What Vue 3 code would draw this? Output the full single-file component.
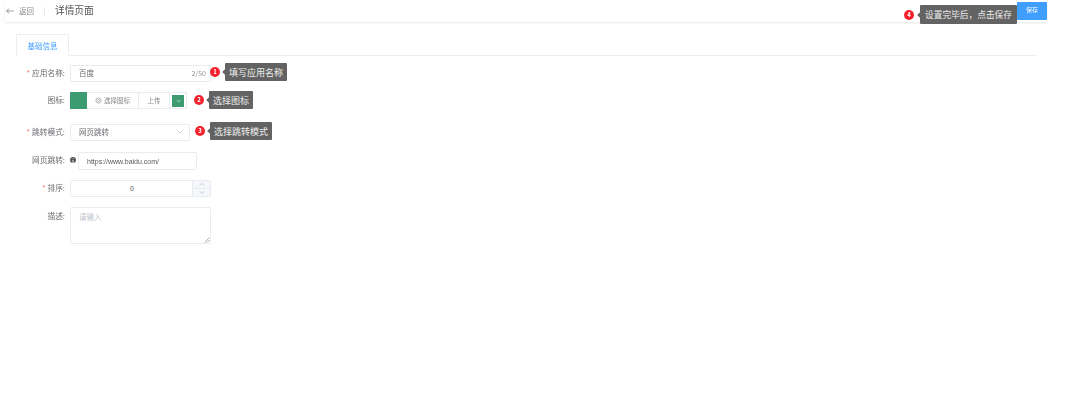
<template>
  <div class="page">
    <header class="topbar">
      <div class="back">
        <svg class="back-icon" viewBox="0 0 8 6" width="8" height="6">
          <path d="M3 .6.6 3 3 5.4M.6 3H7.6" fill="none" stroke="#6b6d70" stroke-width=".7" />
        </svg>
        <span>返回</span>
      </div>
      <i class="divider"></i>
      <h1 class="title">详情页面</h1>
      <div class="top-right">
        <span class="badge">4</span>
        <span class="tip">设置完毕后，点击保存</span>
        <button class="save">保存</button>
      </div>
    </header>

    <main class="content">
      <div class="tabs">
        <div class="tab">基础信息</div>
      </div>

      <form class="form" @submit.prevent>
        <div class="row row-name">
          <label class="label"><em>*</em>应用名称:</label>
          <div class="input name-input">
            <span>百度</span>
            <span class="count">2/50</span>
          </div>
          <span class="badge">1</span>
          <span class="tip">填写应用名称</span>
        </div>

        <div class="row row-icon">
          <label class="label">图标:</label>
          <div class="icon-group">
            <i class="swatch"></i>
            <div class="pick">
              <svg viewBox="0 0 8 8" width="7" height="7">
                <circle cx="4" cy="4" r="3" fill="none" stroke="#8a8c90" stroke-width=".7" />
                <circle cx="4" cy="4" r="1.2" fill="none" stroke="#8a8c90" stroke-width=".6" />
              </svg>
              选择图标
            </div>
            <div class="upload">上传</div>
          </div>
          <div class="color-box">
            <div class="color-inner">
              <svg viewBox="0 0 6 4" width="5" height="4">
                <path d="M.8.8 3 3 5.2.8" fill="none" stroke="#fff" stroke-width=".8" />
              </svg>
            </div>
          </div>
          <span class="badge">2</span>
          <span class="tip">选择图标</span>
        </div>

        <div class="row row-mode">
          <label class="label"><em>*</em>跳转模式:</label>
          <div class="input mode-select">
            <span>网页跳转</span>
            <svg viewBox="0 0 8 5" width="8" height="5">
              <path d="M.7.7 4 4 7.3.7" fill="none" stroke="#c0c4cc" stroke-width=".7" />
            </svg>
          </div>
          <span class="badge">3</span>
          <span class="tip">选择跳转模式</span>
        </div>

        <div class="row row-url">
          <label class="label">网页跳转:</label>
          <span class="info">i</span>
          <div class="input url-input">https://www.baidu.com/</div>
        </div>

        <div class="row row-sort">
          <label class="label"><em>*</em>排序:</label>
          <div class="input number">
            <span class="value">0</span>
            <div class="stepper">
              <div>
                <svg viewBox="0 0 8 4" width="6" height="3"><path d="M.7 3.4 4 .6 7.3 3.4" fill="none" stroke="#b4b7bd" stroke-width=".8" /></svg>
              </div>
              <div>
                <svg viewBox="0 0 8 4" width="6" height="3"><path d="M.7.6 4 3.4 7.3.6" fill="none" stroke="#b4b7bd" stroke-width=".8" /></svg>
              </div>
            </div>
          </div>
        </div>

        <div class="row row-desc">
          <label class="label">描述:</label>
          <div class="input textarea">
            <span>请输入</span>
            <svg class="grip" viewBox="0 0 6 6" width="6" height="6">
              <path d="M.5 5.5 5.5.5M3 5.5 5.5 3" fill="none" stroke="#777" stroke-width=".6" />
            </svg>
          </div>
        </div>
      </form>
    </main>
  </div>
</template>

<script setup>
</script>

<style>
html,
body {
  margin: 0;
  background: #fff;
}
</style>

<style scoped>
.page {
  width: 1070px;
  height: 414px;
  overflow: hidden;
  font-family: "Noto Sans CJK SC", "Liberation Sans", sans-serif;
  color: #606266;
  font-size: 7px;
  filter: blur(0.5px);
}

.topbar {
  display: flex;
  align-items: center;
  width: 1042px;
  height: 22px;
  margin-left: 5px;
  box-shadow: 0 1px 2px rgba(0, 0, 0, 0.1);
}
.back {
  display: flex;
  align-items: center;
  gap: 5px;
  margin-left: 1px;
  padding-bottom: 1px;
  color: #85878b;
  font-size: 7.5px;
}
.divider {
  width: 1px;
  height: 9px;
  margin: 0 11px 0 10px;
  background: #e8e9eb;
}
.title {
  margin: 0 0 2px -1px;
  font-size: 9.7px;
  font-weight: 400;
  color: #555;
}
.top-right {
  display: flex;
  align-items: flex-start;
  height: 22px;
  margin-left: auto;
}
.top-right .badge {
  margin: 10px 6px 0 0;
}
.top-right .tip {
  width: 97px;
  height: 19px;
  margin-top: 5px;
  padding: 0;
  font-size: 8.7px;
}
.save {
  width: 30px;
  height: 18px;
  margin-top: 2px;
  padding: 0 0 3px;
  border: 0;
  border-radius: 1px;
  background: #409eff;
  color: #fff;
  font-family: inherit;
  font-size: 6px;
}

.content {
  width: 1021px;
  margin: 12px 0 0 16px;
}
.tabs {
  height: 21px;
  border-bottom: 1px solid #eceef1;
}
.tab {
  box-sizing: border-box;
  display: flex;
  align-items: center;
  justify-content: center;
  width: 53px;
  height: 22px;
  border: 1px solid #eceef1;
  border-bottom-color: #fff;
  border-radius: 2px 2px 0 0;
  color: #409eff;
  font-size: 7.5px;
}

.form {
  margin: 9px 0 0 -16px;
}
.row {
  display: flex;
  align-items: center;
  height: 17px;
}
.row-icon {
  margin-top: 10px;
}
.row-mode {
  margin-top: 15px;
}
.row-url {
  margin-top: 11px;
  height: 18px;
}
.row-sort {
  margin-top: 10px;
}
.row-desc {
  align-items: flex-start;
  height: 37px;
  margin-top: 10px;
}

.label {
  flex: none;
  box-sizing: border-box;
  width: 70px;
  padding: 0 5px 2px 0;
  text-align: right;
  font-size: 7.7px;
  color: #6a6c70;
}
.row-url .label {
  padding-bottom: 4px;
}
.row-desc .label {
  padding: 3px 5px 0 0;
}
.label em {
  margin-right: 2px;
  color: #f56c6c;
  font-style: normal;
}

.input {
  box-sizing: border-box;
  display: flex;
  align-items: center;
  height: 100%;
  padding: 0 8px 2px;
  border: 1px solid #e8ebf0;
  border-radius: 2px;
  background: #fff;
  font-size: 7.5px;
  color: #6a6c70;
}
.name-input {
  justify-content: space-between;
  width: 141px;
  padding-right: 4px;
}
.count {
  color: #909399;
  font-size: 7px;
}
.mode-select {
  justify-content: space-between;
  width: 120px;
  padding-right: 5px;
}
.url-input {
  width: 119px;
  padding-bottom: 0;
  font-family: "Liberation Sans", sans-serif;
  font-size: 7px;
  color: #55585c;
}
.number {
  position: relative;
  justify-content: center;
  width: 141px;
  padding: 0 17px 0 0;
  font-family: "Liberation Sans", sans-serif;
  font-size: 7px;
  color: #55585c;
}
.stepper {
  position: absolute;
  top: 0;
  right: 0;
  bottom: 0;
  display: flex;
  flex-direction: column;
  width: 17px;
  border-left: 1px solid #e8ebf0;
  background: #f5f7fa;
}
.stepper div {
  display: flex;
  flex: 1;
  align-items: center;
  justify-content: center;
}
.stepper div + div {
  border-top: 1px solid #e8ebf0;
}
.textarea {
  position: relative;
  align-items: flex-start;
  width: 141px;
  padding-top: 3px;
  color: #c0c4cc;
}
.grip {
  position: absolute;
  right: 0;
  bottom: 0;
}

.icon-group {
  display: flex;
  height: 100%;
}
.swatch {
  width: 17px;
  background: #3d9b72;
}
.pick,
.upload {
  box-sizing: border-box;
  display: flex;
  align-items: center;
  justify-content: center;
  padding-bottom: 1px;
  border: 1px solid #e8ebf0;
  font-size: 6.5px;
  color: #85878b;
}
.pick {
  gap: 2px;
  width: 52px;
  border-left: 0;
}
.upload {
  width: 31px;
  border-left: 0;
}
.color-box {
  box-sizing: border-box;
  display: flex;
  align-items: center;
  justify-content: center;
  width: 17px;
  height: 100%;
  border: 1px solid #e8ebf0;
  border-left: 0;
}
.color-inner {
  display: flex;
  align-items: center;
  justify-content: center;
  width: 12px;
  height: 12px;
  background: #3d9b72;
}

.badge {
  flex: none;
  display: flex;
  align-items: center;
  justify-content: center;
  width: 10px;
  height: 10px;
  border-radius: 50%;
  background: #f5222d;
  color: #fff;
  font-size: 6px;
  font-weight: 700;
  line-height: 1;
}
.row-name .badge {
  margin: 0 5px 3px -1px;
}
.row-icon .badge {
  margin: 0 5px 1px 7px;
}
.row-mode .badge {
  margin: 0 5px 3px 5px;
}
.tip {
  position: relative;
  box-sizing: border-box;
  display: flex;
  align-items: center;
  justify-content: center;
  height: 18px;
  padding: 0 4px;
  border-radius: 1px;
  background: #636363;
  color: #eee;
  font-size: 9px;
  white-space: nowrap;
}
.row-name .tip,
.row-mode .tip {
  margin-bottom: 3px;
}
.row-icon .tip {
  margin-bottom: 1px;
}
.tip::before {
  content: "";
  position: absolute;
  top: 50%;
  left: -2px;
  width: 4px;
  height: 4px;
  background: #636363;
  transform: translateY(-50%) rotate(45deg);
}

.info {
  display: flex;
  align-items: center;
  justify-content: center;
  width: 6px;
  height: 6px;
  margin: 0 2px 2px 0;
  border-radius: 50%;
  background: #55585c;
  color: #fff;
  font-size: 5px;
  font-weight: 700;
  line-height: 1;
}
</style>
